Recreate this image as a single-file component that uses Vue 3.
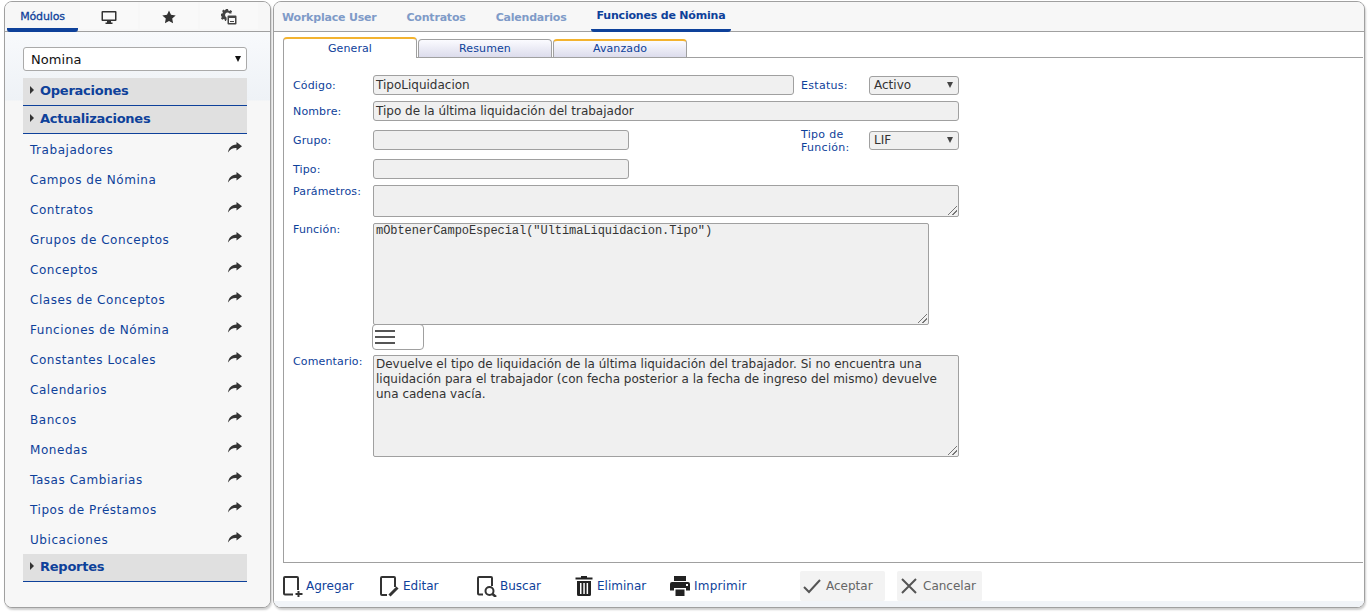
<script setup>
const modulos = ['Trabajadores','Campos de Nómina','Contratos','Grupos de Conceptos','Conceptos','Clases de Conceptos','Funciones de Nómina','Constantes Locales','Calendarios','Bancos','Monedas','Tasas Cambiarias','Tipos de Préstamos','Ubicaciones']
</script>

<template>
  <div class="page">
    <aside class="left">
      <nav class="ltabs">
        <div class="ltab on">Módulos</div>
        <div class="ltab">
          <svg width="16" height="16" viewBox="0 0 16 16"><path fill="#333" fill-rule="evenodd" d="M1.5 2h13A1 1 0 0 1 15.500 3v8a1 1 0 0 1-1 1H10v1.500h1.500V15h-7v-1.500H6V12H1.500a1 1 0 0 1-1-1V3a1 1 0 0 1 1-1zM2 3.500V10.500H14V3.500z"/></svg>
        </div>
        <div class="ltab">
          <svg width="14" height="14" viewBox="0 0 14 14"><path fill="#333" d="M7 .5l2 4.300 4.700.6-3.500 3.200.9 4.700L7 11l-4.100 2.300.9-4.700L.3 5.400 5 4.800z"/></svg>
        </div>
        <div class="ltab">
          <svg width="16" height="16" viewBox="0 0 16 16"><path fill="#444" d="M5 0h2l.3 1.400 1.100.5L9.700 1l1.400 1.400-.8 1.300.3.800H8.500A2.500 2.500 0 1 0 5.600 8.400V11l-.3.100L5 12H4l-.3-1.500-1.100-.5-1.300.8L0 9.400l.8-1.300-.5-1.100L0 6.700v-2l1.400-.3.500-1.100-.8-1.300L2.500.6l1.300.8z"/><path fill="#444" fill-rule="evenodd" d="M7.500 6.500h7a1 1 0 0 1 1 1v7a1 1 0 0 1-1 1h-7a1 1 0 0 1-1-1v-7a1 1 0 0 1 1-1zm.5 2.500v5h6V9zm1 3h4v1H9z"/></svg>
        </div>
      </nav>
      <div class="lbody">
        <div class="modsel"><span>Nomina</span><i class="caret dark"></i></div>
        <div class="group"><i class="tri"></i>Operaciones</div>
        <div class="group"><i class="tri"></i>Actualizaciones</div>
        <ul class="mods">
          <li v-for="m in modulos" :key="m">
            <span>{{ m }}</span>
            <svg width="14" height="11" viewBox="0 0 14 11"><path fill="#333" d="M8.500 0L14 4.200 8.500 8.400V6C5 5.800 2.300 6.800 0 10.500 .6 6 3.300 2.600 8.500 2.400z"/></svg>
          </li>
        </ul>
        <div class="group last"><i class="tri"></i>Reportes</div>
      </div>
    </aside>

    <main class="right">
      <nav class="rtabs">
        <div class="rtab">Workplace User</div>
        <div class="rtab">Contratos</div>
        <div class="rtab">Calendarios</div>
        <div class="rtab on">Funciones de Nómina</div>
      </nav>
      <div class="rbody">
        <div class="subtabs">
          <div class="st active">General</div>
          <div class="st plain">Resumen</div>
          <div class="st gold">Avanzado</div>
        </div>
        <div class="sheet">
          <div class="row r1">
            <label class="lab">Código:</label>
            <div class="inp w421">TipoLiquidacion</div>
            <label class="lab2">Estatus:</label>
            <div class="sel">Activo<i class="caret"></i></div>
          </div>
          <div class="row r2">
            <label class="lab">Nombre:</label>
            <div class="inp w586">Tipo de la última liquidación del trabajador</div>
          </div>
          <div class="row r3">
            <label class="lab">Grupo:</label>
            <div class="inp w256"></div>
            <label class="lab2 two">Tipo de Función:</label>
            <div class="sel">LIF<i class="caret"></i></div>
          </div>
          <div class="row r4">
            <label class="lab">Tipo:</label>
            <div class="inp w256"></div>
          </div>
          <div class="row top r5">
            <label class="lab">Parámetros:</label>
            <div class="ta w586 h32"><i class="grip"></i></div>
          </div>
          <div class="row top r6">
            <label class="lab">Función:</label>
            <div class="ta mono w556 h102">mObtenerCampoEspecial("UltimaLiquidacion.Tipo")<i class="grip"></i></div>
          </div>
          <button class="burger" type="button"><i></i><i></i><i></i></button>
          <div class="row top r7">
            <label class="lab">Comentario:</label>
            <div class="ta w586 h102">Devuelve el tipo de liquidación de la última liquidación del trabajador. Si no encuentra una liquidación para el trabajador (con fecha posterior a la fecha de ingreso del mismo) devuelve una cadena vacía.<i class="grip"></i></div>
          </div>
        </div>
        <div class="tools">
          <div class="tool t1">
            <svg width="20" height="21" viewBox="0 0 20 21"><path fill="none" stroke="#333" stroke-width="2" stroke-linejoin="round" d="M10 18.500H2a1 1 0 0 1-1-1V2a1 1 0 0 1 1-1h12a1 1 0 0 1 1 1v12"/><path stroke="#333" stroke-width="2" d="M15.500 15v6M12.500 18h7"/></svg>
            <span>Agregar</span>
          </div>
          <div class="tool t2">
            <svg width="20" height="21" viewBox="0 0 20 21"><path fill="none" stroke="#333" stroke-width="2" d="M7 19H2a1 1 0 0 1-1-1V2a1 1 0 0 1 1-1h12a1 1 0 0 1 1 1v9"/><path stroke="#333" stroke-width="3" d="M9.500 19.500l8-8"/></svg>
            <span>Editar</span>
          </div>
          <div class="tool t3">
            <svg width="20" height="21" viewBox="0 0 20 21"><path fill="none" stroke="#333" stroke-width="2" d="M6 18.500H2a1 1 0 0 1-1-1V2a1 1 0 0 1 1-1h12a1 1 0 0 1 1 1v8"/><circle cx="12.500" cy="15" r="4" fill="none" stroke="#333" stroke-width="2"/><path stroke="#333" stroke-width="2.500" d="M15.500 18l3.500 3"/></svg>
            <span>Buscar</span>
          </div>
          <div class="tool t4">
            <svg width="18" height="20" viewBox="0 0 18 20"><path fill="#222" fill-rule="evenodd" d="M6 0h6v1.500h5.500v2H.5v-2H6zM2 5h14v13.500A1.500 1.500 0 0 1 14.500 20h-11A1.500 1.500 0 0 1 2 18.500zM5 7v11h1.500V7zm3.300 0v11h1.500V7zm3.300 0v11h1.500V7z"/></svg>
            <span>Eliminar</span>
          </div>
          <div class="tool t5">
            <svg width="20" height="20" viewBox="0 0 20 20"><path fill="#222" fill-rule="evenodd" d="M4 0h12v5H4zM2 6h16a2 2 0 0 1 2 2v6.500h-4V12H4v2.500H0V8a2 2 0 0 1 2-2zM5.500 13.500h9V20h-9z"/><rect x="16" y="8" width="2" height="2" fill="#fff"/></svg>
            <span class="wide">Imprimir</span>
          </div>
          <div class="btn b1">
            <svg width="18" height="16" viewBox="0 0 18 16"><path fill="none" stroke="#555" stroke-width="2" d="M1 9l5 5L17 2"/></svg>
            <span>Aceptar</span>
          </div>
          <div class="btn b2">
            <svg width="16" height="16" viewBox="0 0 16 16"><path fill="none" stroke="#555" stroke-width="2" d="M1 1l14 14M15 1L1 15"/></svg>
            <span>Cancelar</span>
          </div>
        </div>
      </div>
    </main>
  </div>
</template>

<style>
html, body { margin: 0; background: #fff; }
</style>

<style scoped>
* { box-sizing: border-box; }
.page {
  width: 1369px; height: 614px; overflow: hidden;
  display: flex; gap: 2px; padding: 1px 4px 0 4px;
  font-family: "DejaVu Sans", Verdana, sans-serif; font-size: 12px;
  background: #fff;
}
.left, .right {
  height: 607px; border: 1px solid #a0a0a0; border-radius: 8px;
  overflow: hidden; background: #f7f7f7; display: flex; flex-direction: column;
  box-shadow: 1px 2px 2px #cfcfcf;
}
.left { width: 267px; flex: none; }
.right { flex: 1; min-width: 0; background: #f3f5f8; }

.ltabs { height: 30px; flex: none; display: flex; gap: 2px; border-bottom: 1px solid #a0a0a0; padding: 0 0 0 2px; background: #f7f7f7; }
.ltab { width: 58px; height: 27px; display: flex; align-items: center; justify-content: center; background: #f9f9f9; padding-top: 2px; }
.ltab.on { width: 71px; border-bottom: 4px solid #0e419a; border-radius: 0 0 3px 3px; font-size: 11px; color: #0e419a; letter-spacing: -.15px; -webkit-text-stroke: .3px #0e419a; height: 30px; padding: 3px 0 0; background: none; }
.lbody { flex: 1; padding: 15px 23px 0 18px; background: linear-gradient(#f8fafc 0, #f6f8fb 14px, #eef2f6 68px, #f7f7f7 69px); }
.modsel { height: 24px; margin-bottom: 7px; border: 1px solid #aaa; border-radius: 3px; background: #fff; display: flex; align-items: center; justify-content: space-between; padding: 0 5px 0 7px; color: #111; font-size: 13px; letter-spacing: .05px; }
.caret { width: 0; height: 0; border-left: 3.500px solid transparent; border-right: 3.500px solid transparent; border-top: 6px solid #444; }
.caret.dark { border-top-color: #111; }
.group { height: 28px; background: #e0e0e0; border-bottom: 1px solid #0e419a; color: #0e419a; font-weight: 700; font-size: 13px; display: flex; align-items: center; padding: 0 0 3px 7px; letter-spacing: -.25px; }
.group:first-of-type { border-radius: 3px 3px 0 0; }
.group .tri { width: 0; height: 0; border-top: 4px solid transparent; border-bottom: 4px solid transparent; border-left: 4px solid #333; margin-right: 6px; }
.mods { list-style: none; margin: 0; padding: 0; }
.mods li { height: 30px; display: flex; justify-content: space-between; padding: 1px 5px 0 7px; align-items: center; color: #0e419a; letter-spacing: .55px; }
.mods li svg { margin-top: -4px; }

.rtabs { height: 30px; flex: none; display: flex; border-bottom: 1px solid #a0a0a0; background: #f7f7f7; padding-left: 8px; font-weight: 700; font-size: 11px; letter-spacing: -.2px; color: #7f9bc8; }
.rtab { height: 29px; padding: 2px 6px 0 0; margin-right: 24px; display: flex; align-items: center; }
.rtab.on { color: #0e419a; height: 30px; border-bottom: 3px solid #0e419a; border-radius: 0 0 3px 3px; padding: 0 6px; margin-left: -6px; }
.rbody { flex: 1; background: #fff; display: flex; flex-direction: column; padding: 5px 0 0 9px; border-bottom: 6px solid #f1f4f8; }
.subtabs { height: 20px; display: flex; flex: none; gap: 1px; position: relative; z-index: 1; }
.st { height: 18px; margin-top: 2px; width: 134px; border: 1px solid #a0a0a0; border-bottom: 0; border-radius: 4px 4px 0 0; display: flex; align-items: center; justify-content: center; color: #0e419a; font-size: 11px; letter-spacing: .1px; background: linear-gradient(#fbfbff, #dcdcec); padding-bottom: 1px; }
.st.active { margin-top: 0; height: 21px; background: #fff; border-top: 2px solid #f3b32f; padding-bottom: 1px; }
.st.gold { border-top: 2px solid #f3b32f; padding-bottom: 1px; }
.sheet { height: 506px; flex: none; border: 1px solid #a0a0a0; border-right: 0; margin-right: 1px; padding: 17px 0 0 9px; }
.row { display: flex; align-items: center; height: 20px; }
.row.top { align-items: flex-start; height: auto; }
.lab { width: 80px; flex: none; font-size: 11px; color: #0e419a; letter-spacing: .15px; }
.lab2 { width: 68px; flex: none; margin-left: 7px; font-size: 11px; color: #0e419a; letter-spacing: .3px; line-height: 13px; }
.lab2.two { margin-left: 172px; padding-top: 1px; }
.inp { height: 20px; flex: none; border: 1px solid #a0a0a0; border-radius: 3px; background: #f0f0f0; padding: 0 2px; font-size: 12px; color: #333; line-height: 19px; white-space: nowrap; }
.sel { width: 90px; flex: none; height: 19px; border: 1px solid #a0a0a0; border-radius: 3px; background: #f0f0f0; padding: 0 5px 0 4px; font-size: 12px; color: #333; display: flex; justify-content: space-between; align-items: center; }
.w421 { width: 421px; } .w586 { width: 586px; } .w256 { width: 256px; } .w556 { width: 556px; }
.r2 { margin-top: 6px; } .r3 { margin-top: 9px; } .r4 { margin-top: 9px; } .r5 { margin-top: 6px; } .r6 { margin-top: 6px; } .r7 { margin-top: 5px; }
.ta { position: relative; flex: none; border: 1px solid #a0a0a0; border-radius: 2px; background: #f0f0f0; font-size: 12px; color: #333; padding: 1px 2px; line-height: 15px; }
.mono { font-family: "Liberation Mono", monospace; font-size: 12px; letter-spacing: -.05px; padding: 1px 2px; line-height: 13px; }
.h32 { height: 32px; }
.h102 { height: 102px; }
.grip { position: absolute; right: 1px; bottom: 1px; width: 9px; height: 9px; background: linear-gradient(135deg, transparent 45%, #777 45%, #777 55%, transparent 55%, transparent 70%, #777 70%, #777 80%, transparent 80%); }
.burger { display: flex; flex-direction: column; gap: 4px; width: 52px; height: 26px; margin: -1px 0 0 79px; padding: 5px 0 0 2px; border: 1px solid #a0a0a0; border-radius: 4px; background: #fff; }
.burger i { display: block; width: 20px; height: 2px; background: #555; }
.tools { flex: 1; display: flex; align-items: flex-start; padding-top: 8px; color: #0e419a; font-size: 12px; }
.tool { display: flex; align-items: center; gap: 3px; height: 30px; }
.wide { letter-spacing: .2px; }
.t1 { width: 97px; } .t2 { width: 97px; } .t3 { width: 98px; } .t4 { width: 95px; gap: 4px; } .t5 { width: 130px; gap: 4px; }
.btn { display: flex; align-items: center; gap: 5px; height: 30px; width: 85px; background: #f3f3f3; border-radius: 2px; color: #666; padding-left: 3px; }
.b2 { margin-left: 12px; gap: 6px; padding-left: 4px; }
</style>
